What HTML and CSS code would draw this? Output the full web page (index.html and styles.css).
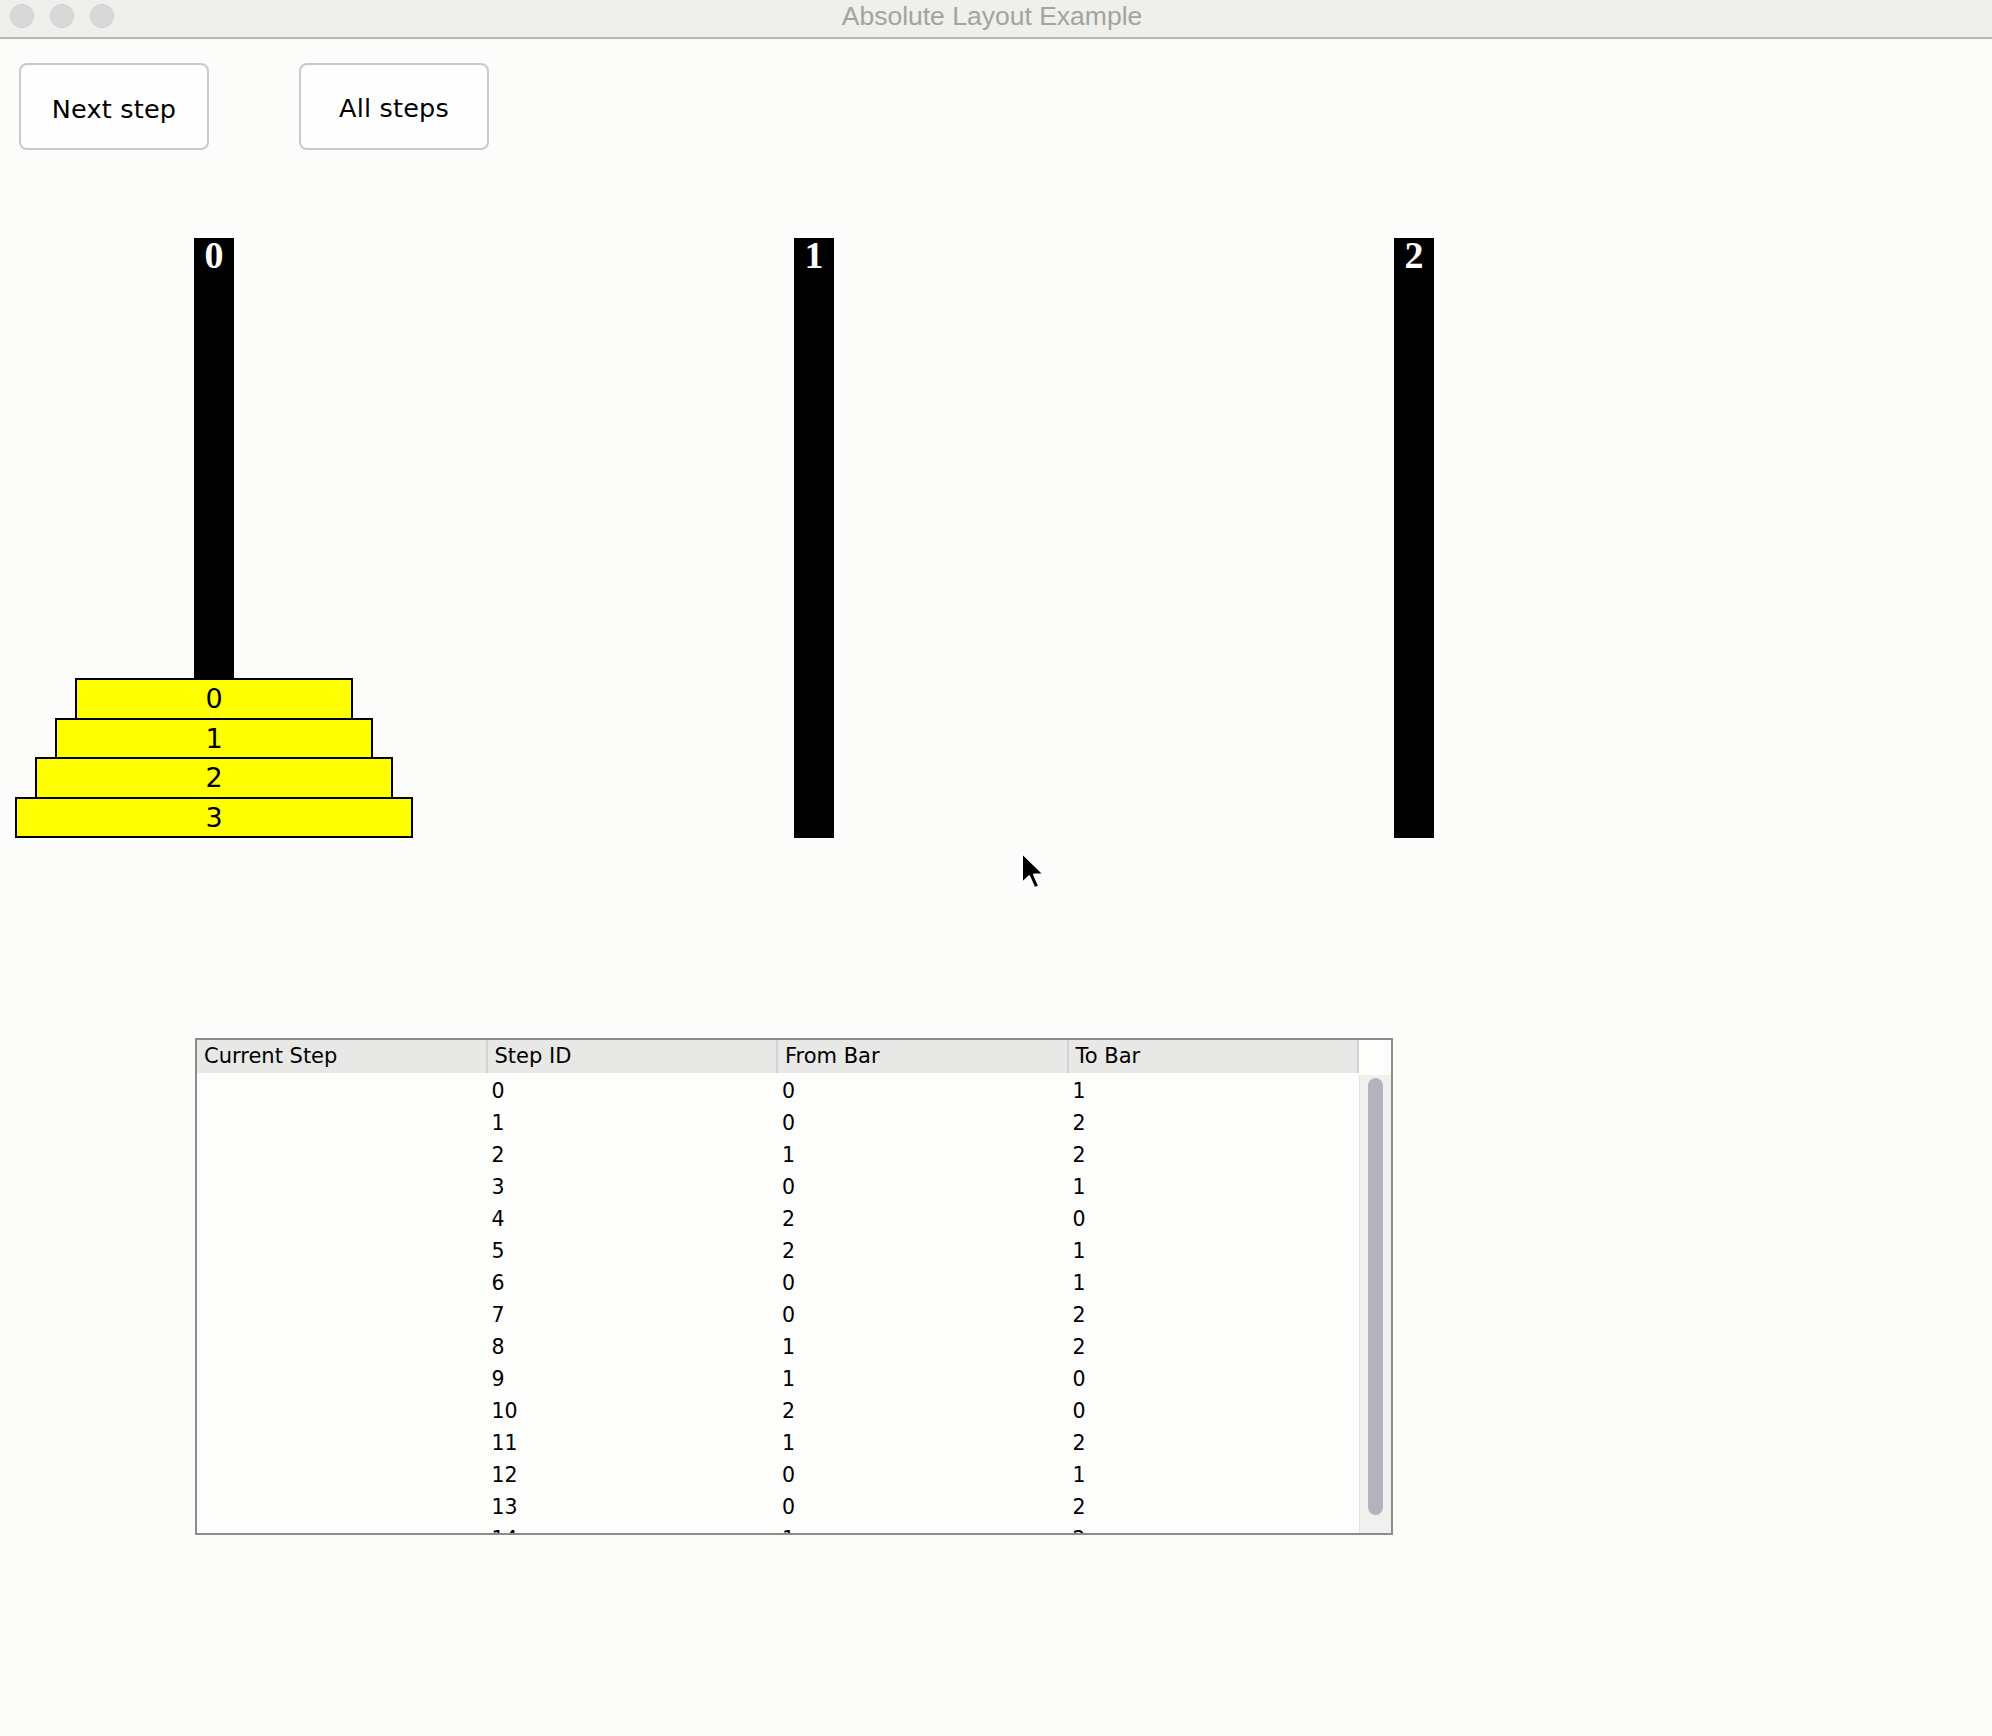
FILE: index.html
```html
<!DOCTYPE html>
<html lang="en">
<head>
<meta charset="utf-8">
<title>Absolute Layout Example</title>
<link rel="stylesheet" href="styles.css">
</head>
<body>
<header class="titlebar">
  <div class="lights">
    <span class="light"></span>
    <span class="light"></span>
    <span class="light"></span>
  </div>
  <div class="title">Absolute Layout Example</div>
  <div></div>
</header>
<main class="content">
  <div class="toolbar">
    <button class="btn">Next step</button>
    <button class="btn btn-all">All steps</button>
  </div>

  <div class="towers">
    <div class="tower">
      <div class="rod"><span class="rod-label">0</span></div>
      <div class="disks">
        <div class="disk d0">0</div>
        <div class="disk d1">1</div>
        <div class="disk d2">2</div>
        <div class="disk d3">3</div>
      </div>
    </div>
    <div class="tower">
      <div class="rod"><span class="rod-label">1</span></div>
    </div>
    <div class="tower">
      <div class="rod"><span class="rod-label">2</span></div>
    </div>
  </div>

  <div class="table">
    <div class="thead">
      <div class="th">Current Step</div>
      <div class="th">Step ID</div>
      <div class="th">From Bar</div>
      <div class="th">To Bar</div>
    </div>
    <div class="corner"></div>
    <div class="tbody">
      <div class="tr"><div></div><div>0</div><div>0</div><div>1</div></div>
      <div class="tr"><div></div><div>1</div><div>0</div><div>2</div></div>
      <div class="tr"><div></div><div>2</div><div>1</div><div>2</div></div>
      <div class="tr"><div></div><div>3</div><div>0</div><div>1</div></div>
      <div class="tr"><div></div><div>4</div><div>2</div><div>0</div></div>
      <div class="tr"><div></div><div>5</div><div>2</div><div>1</div></div>
      <div class="tr"><div></div><div>6</div><div>0</div><div>1</div></div>
      <div class="tr"><div></div><div>7</div><div>0</div><div>2</div></div>
      <div class="tr"><div></div><div>8</div><div>1</div><div>2</div></div>
      <div class="tr"><div></div><div>9</div><div>1</div><div>0</div></div>
      <div class="tr"><div></div><div>10</div><div>2</div><div>0</div></div>
      <div class="tr"><div></div><div>11</div><div>1</div><div>2</div></div>
      <div class="tr"><div></div><div>12</div><div>0</div><div>1</div></div>
      <div class="tr"><div></div><div>13</div><div>0</div><div>2</div></div>
      <div class="tr"><div></div><div>14</div><div>1</div><div>2</div></div>
    </div>
    <div class="scrollbar"><div class="thumb"></div></div>
  </div>
</main>
<svg class="cursor" width="28" height="40" viewBox="0 0 14 20" aria-hidden="true">
  <path d="M1 1 L1 16 L4.6 12.6 L7.2 18.6 L9.6 17.6 L7 11.8 L12 11.8 Z" fill="#000" stroke="#fff" stroke-width="1" stroke-linejoin="round"/>
</svg>
</body>
</html>
```

FILE: styles.css
```css
html, body {
  margin: 0;
  padding: 0;
}

body {
  width: 1992px;
  height: 1736px;
  background: #fcfcfa;
  font-family: "DejaVu Sans", "Noto Sans", sans-serif;
  color: #000;
  overflow: hidden;
  position: relative;
}

.titlebar {
  height: 37px;
  background: #efefec;
  border-bottom: 2px solid #b6b6b6;
  display: grid;
  grid-template-columns: 1fr auto 1fr;
  align-items: center;
}

.lights {
  display: flex;
  gap: 16px;
  padding-left: 10px;
  margin-top: -6px;
}

.light {
  width: 24px;
  height: 24px;
  border-radius: 50%;
  background: #d9d9d9;
  box-sizing: border-box;
  border: 1px solid #cfcfcf;
}

.title {
  font-family: "Liberation Sans", Arial, sans-serif;
  font-size: 26.5px;
  color: #a3a3a3;
  line-height: 37px;
  margin-top: -4px;
  margin-left: -8px;
}

.content {
  padding: 24px 0 0 0;
}

.toolbar {
  display: flex;
  gap: 90px;
  padding-left: 19px;
}

.btn {
  width: 190px;
  height: 87px;
  box-sizing: border-box;
  background: #fefefe;
  border: 2px solid #c9c9d3;
  border-radius: 8px;
  font-family: "DejaVu Sans", sans-serif;
  font-size: 25.5px;
  color: #000;
  padding: 5px 0 0 0;
  letter-spacing: 0.2px;
}

.btn-all {
  padding-top: 2px;
}

.towers {
  display: flex;
  gap: 202px;
  padding-left: 15px;
  margin-top: 88px;
}

.tower {
  width: 398px;
  height: 600px;
  display: grid;
}

.rod {
  grid-area: 1 / 1;
  justify-self: center;
  width: 40px;
  height: 600px;
  background: #000;
  display: flex;
  flex-direction: column;
  align-items: center;
}

.rod-label {
  font-family: "Liberation Serif", "Times New Roman", serif;
  font-weight: bold;
  font-size: 38px;
  line-height: 38px;
  color: #fff;
  margin-top: -2px;
}

.disks {
  grid-area: 1 / 1;
  align-self: end;
  justify-self: center;
  display: flex;
  flex-direction: column;
  align-items: center;
}

.disk {
  height: 41.5px;
  box-sizing: border-box;
  background: #ffff00;
  border: 2px solid #000;
  font-size: 27px;
  line-height: 37.5px;
  text-align: center;
}

.disk + .disk {
  margin-top: -2px;
}

.d0 { width: 278px; }
.d1 { width: 318px; }
.d2 { width: 358px; }
.d3 { width: 398px; }

.table {
  margin: 200px 0 0 195px;
  width: 1198px;
  height: 497px;
  box-sizing: border-box;
  border: 2px solid #8c8c8c;
  background: #fdfdfc;
  display: grid;
  grid-template-columns: 1162px 32px;
  grid-template-rows: 35px 458px;
}

.thead {
  display: grid;
  grid-template-columns: repeat(4, 1fr);
  height: 33px;
  background: #e8e8e6;
}

.th {
  font-size: 21px;
  line-height: 33px;
  padding-left: 7px;
  border-right: 2px solid #d2d2d2;
  white-space: nowrap;
}

.corner {
  background: #fdfdfc;
}

.tbody {
  overflow: hidden;
}

.tr {
  display: grid;
  grid-template-columns: repeat(4, 1fr);
  height: 32px;
  font-size: 20.5px;
  line-height: 32px;
}

.tr > div {
  padding-left: 4px;
}

.scrollbar {
  background: #f0f0ee;
  border-left: 1px solid #e2e2e2;
  padding: 3px 8px 0 8px;
}

.thumb {
  width: 15px;
  height: 437px;
  border-radius: 8px;
  background: #b3b3bd;
}

.cursor {
  position: absolute;
  left: 1020px;
  top: 851px;
}
```
